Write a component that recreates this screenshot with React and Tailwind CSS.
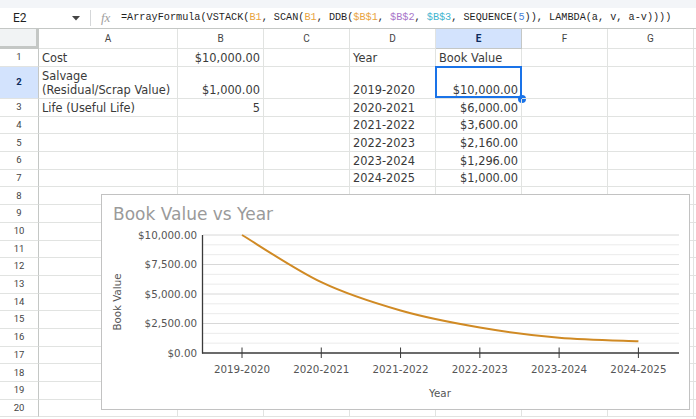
import React from 'react';

const COLS = [
  { key: 'A', w: 'w-[139px]' },
  { key: 'B', w: 'w-[86px]' },
  { key: 'C', w: 'w-[86px]' },
  { key: 'D', w: 'w-[86px]' },
  { key: 'E', w: 'w-[86px]' },
  { key: 'F', w: 'w-[86px]' },
  { key: 'G', w: 'w-[86px]' },
];

const ROWS = [
  { n: 1, h: 'h-[18px]', cells: { A: 'Cost', B: '$10,000.00', D: 'Year', E: 'Book Value' } },
  { n: 2, h: 'h-[32px]', cells: { A: 'Salvage (Residual/Scrap Value)', B: '$1,000.00', D: '2019-2020', E: '$10,000.00' } },
  { n: 3, h: 'h-[17.7px]', cells: { A: 'Life (Useful Life)', B: '5', D: '2020-2021', E: '$6,000.00' } },
  { n: 4, h: 'h-[17.7px]', cells: { D: '2021-2022', E: '$3,600.00' } },
  { n: 5, h: 'h-[17.7px]', cells: { D: '2022-2023', E: '$2,160.00' } },
  { n: 6, h: 'h-[17.7px]', cells: { D: '2023-2024', E: '$1,296.00' } },
  { n: 7, h: 'h-[17.7px]', cells: { D: '2024-2025', E: '$1,000.00' } },
  ...Array.from({ length: 13 }, (_, i) => ({ n: 8 + i, h: 'h-[17.7px]', cells: {} })),
];

// text cells read left, everything else right
const LEFT = ['A', 'D'];
const isLeft = (col, row) => LEFT.includes(col) || (col === 'E' && row === 1);

const YEARS = ['2019-2020', '2020-2021', '2021-2022', '2022-2023', '2023-2024', '2024-2025'];
const VALUES = [10000, 6000, 3600, 2160, 1296, 1000];

const X0 = 242;
const STEP = 79.28;
const Y_BASE = 353;
const Y_TOP = 235;
const yOf = (v) => Y_BASE - (v / 10000) * (Y_BASE - Y_TOP);

function smoothPath(pts) {
  let d = `M${pts[0][0]},${pts[0][1]}`;
  for (let i = 0; i < pts.length - 1; i++) {
    const p0 = pts[i - 1] || pts[i];
    const p1 = pts[i];
    const p2 = pts[i + 1];
    const p3 = pts[i + 2] || p2;
    const c1 = [p1[0] + (p2[0] - p0[0]) / 6, p1[1] + (p2[1] - p0[1]) / 6];
    const c2 = [p2[0] - (p3[0] - p1[0]) / 6, p2[1] - (p3[1] - p1[1]) / 6];
    d += ` C${c1[0]},${c1[1]} ${c2[0]},${c2[1]} ${p2[0]},${p2[1]}`;
  }
  return d;
}

function FormulaBar() {
  return (
    <div className="h-[29px] flex flex-col border-b border-[#c4c7c5]">
      <div className="h-[8px] bg-[#f3f5f8]" />
      <div className="flex-1 flex items-center bg-white font-['Roboto',sans-serif]">
        <div className="w-[90px] flex items-center pl-[13px] pr-[10px] justify-between">
          <span className="text-[12px] text-[#1f1f1f]">E2</span>
          <svg width="8" height="5" viewBox="0 0 8 5">
            <path d="M0 0 L8 0 L4 4.5 Z" fill="#444" />
          </svg>
        </div>
        <div className="w-px h-[16px] bg-[#d5d7d9]" />
        <span className="ml-[10px] w-[20px] text-[13px] italic text-[#a0a0a0] font-['Liberation_Serif',serif]">fx</span>
        <span className="text-[10.2px] text-[#1f1f1f] whitespace-nowrap font-['Liberation_Mono',monospace]">
          =ArrayFormula(VSTACK(<span className="text-[#e8a33d]">B1</span>, SCAN(
          <span className="text-[#e8a33d]">B1</span>, DDB(<span className="text-[#e8a33d]">$B$1</span>,{' '}
          <span className="text-[#a874c9]">$B$2</span>, <span className="text-[#3fb4cf]">$B$3</span>, SEQUENCE(
          <span className="text-[#4a7fd6]">5</span>)), LAMBDA(a, v, a-v))))
        </span>
      </div>
    </div>
  );
}

function HeaderRow() {
  return (
    <div className="flex h-[20px] font-['Roboto',sans-serif] text-[10px]">
      <div className="w-[39px] shrink-0 bg-[#f1f3f4] border-r-[3px] border-b-[3px] border-[#c4c7c5]" />
      {COLS.map((c) => (
        <div
          key={c.key}
          className={`${c.w} shrink-0 flex items-center justify-center border-r border-b ${
            c.key === 'E'
              ? 'bg-[#d3e3fd] border-[#c4c7c5] font-bold text-[#0b2a5c]'
              : 'bg-white border-[#e1e3e1] text-[#444]'
          }`}
        >
          {c.key}
        </div>
      ))}
      <div className="flex-1 bg-white border-b border-[#e1e3e1]" />
    </div>
  );
}

function Row({ row }) {
  const sel = row.n === 2;
  return (
    <div className={`flex ${row.h}`}>
      <div
        className={`w-[39px] shrink-0 flex items-center justify-center border-r border-r-[#c4c7c5] border-b border-b-[#e1e3e1] font-['Roboto',sans-serif] text-[9.5px] ${
          sel ? 'bg-[#d3e3fd] font-bold text-[#0b2a5c]' : 'bg-white text-[#444]'
        }`}
      >
        {row.n}
      </div>
      {COLS.map((c) => {
        const text = row.cells[c.key];
        const active = sel && c.key === 'E';
        return (
          <div
            key={c.key}
            className={`${c.w} shrink-0 relative flex items-end border-r border-b border-[#e1e3e1] px-[3px] pb-[1px] font-['DejaVu_Sans',sans-serif] text-[11.4px] leading-[14px] text-[#3a3a3a] ${
              isLeft(c.key, row.n) ? 'justify-start' : 'justify-end text-right'
            }`}
          >
            {text && <span className={c.key === 'A' && row.n === 2 ? 'whitespace-normal' : 'whitespace-nowrap'}>{text}</span>}
            {active && (
              <>
                <div className="absolute -left-[1px] -top-[1px] w-[87px] h-[32px] border-2 border-[#1a73e8]" />
                <div className="absolute -right-[4.5px] -bottom-[4.5px] w-[8px] h-[8px] rounded-full bg-[#1a73e8]" />
              </>
            )}
          </div>
        );
      })}
      <div className="flex-1 border-b border-[#e1e3e1]" />
    </div>
  );
}

function Chart() {
  const pts = VALUES.map((v, i) => [X0 + i * STEP, yOf(v)]);
  const grid = Array.from({ length: 12 }, (_, i) => Y_TOP + i * ((Y_BASE - Y_TOP) / 12));
  const labels = ['$10,000.00', '$7,500.00', '$5,000.00', '$2,500.00', '$0.00'];
  return (
    <div className="absolute left-[101px] top-[194px] w-[589px] h-[216px] border border-[#c2c2c2] bg-white">
      <svg
        width="587"
        height="214"
        viewBox="102 195 587 214"
        className="block font-['DejaVu_Sans',sans-serif]"
      >
        <text x="113" y="219.5" fontSize="17" fill="#9a9a9a">Book Value vs Year</text>
        {grid.map((y, i) => (
          <line key={i} x1="203" x2="679" y1={y} y2={y} stroke={i % 3 === 0 ? '#d8d8d8' : '#ebebeb'} strokeWidth="1" />
        ))}
        {labels.map((l, i) => (
          <text key={l} x="197" y={Y_TOP + i * 29.5 + 3.8} fontSize="10.3" fill="#555" textAnchor="end">
            {l}
          </text>
        ))}
        <text x="121" y="302" fontSize="10.3" fill="#555" textAnchor="middle" transform="rotate(-90 121 302)">
          Book Value
        </text>
        <path d={smoothPath(pts)} fill="none" stroke="#d08a24" strokeWidth="2" strokeLinejoin="round" />
        <line x1="202.5" x2="202.5" y1="235" y2="353.5" stroke="#3a3a3a" strokeWidth="1.3" />
        <line x1="202" x2="679" y1="353" y2="353" stroke="#3a3a3a" strokeWidth="1.3" />
        {YEARS.map((yr, i) => {
          const x = X0 + i * STEP;
          return (
            <g key={yr}>
              <line x1={x} x2={x} y1="347.5" y2="358" stroke="#3a3a3a" strokeWidth="1" />
              <text x={x} y="373" fontSize="10.3" fill="#555" textAnchor="middle">
                {yr}
              </text>
            </g>
          );
        })}
        <text x="440" y="397" fontSize="10.3" fill="#555" textAnchor="middle">Year</text>
      </svg>
    </div>
  );
}

export default function App() {
  return (
    <div className="relative w-[696px] h-[419px] overflow-hidden bg-white">
      <FormulaBar />
      <HeaderRow />
      {ROWS.map((r) => (
        <Row key={r.n} row={r} />
      ))}
      <Chart />
    </div>
  );
}
